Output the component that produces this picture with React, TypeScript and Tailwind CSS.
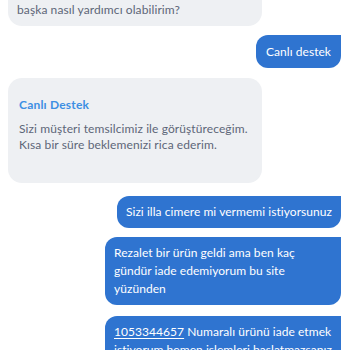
const font = { fontFamily: "Lato, 'Liberation Sans', sans-serif" };

const BotBubble = ({ children, className = "" }: { children: React.ReactNode; className?: string }) => (
  <div className={`w-[254px] bg-[#eef0f3] rounded-[14px] ${className}`}>{children}</div>
);

const UserBubble = ({ children, className = "" }: { children: React.ReactNode; className?: string }) => (
  <div className="flex justify-end">
    <div
      className={`max-w-[236px] bg-[#2f74d0] text-white text-[12px] leading-[18px] tracking-[0.05px] rounded-[12px] rounded-tr-none ${className}`}
    >
      {children}
    </div>
  </div>
);

export default function App() {
  return (
    <div className="h-[350px] w-[350px] overflow-hidden bg-white" style={font}>
      <div className="flex flex-col pl-[8px] pr-[9px] -mt-[20px]">
        <BotBubble className="pt-[22px] pb-[8px] px-[9px]">
          <p className="text-[12px] leading-[16px] tracking-[0.1px] text-[#5d6678]">başka nasıl yardımcı olabilirim?</p>
        </BotBubble>

        <div className="mt-[9px]">
          <UserBubble className="px-[10px] py-[7.5px]">Canlı destek</UserBubble>
        </div>

        <BotBubble className="mt-[10px] pt-[19px] pb-[30px] px-[11px]">
          <p className="text-[12px] font-bold text-[#3d8fe3] leading-[16px] tracking-[0.2px]">Canlı Destek</p>
          <p className="mt-[8px] text-[12px] leading-[16px] tracking-[0.1px] text-[#5d6678]">
            Sizi müşteri temsilcimiz ile görüştüreceğim.
            <br />
            Kısa bir süre beklemenizi rica ederim.
          </p>
        </BotBubble>

        <div className="mt-[13px]">
          <UserBubble className="px-[9px] py-[7px]">Sizi illa cimere mi vermemi istiyorsunuz</UserBubble>
        </div>

        <div className="mt-[9px]">
          <UserBubble className="w-[236px] px-[9px] py-[7px]">
            Rezalet bir ürün geldi ama ben kaç gündür iade edemiyorum bu site yüzünden
          </UserBubble>
        </div>

        <div className="mt-[11px]">
          <UserBubble className="w-[236px] pl-[9px] pr-[6px] py-[7px]">
            <span className="underline underline-offset-2">1053344657</span> Numaralı ürünü iade etmek istiyorum hemen
            işlemleri başlatmazsanız şikayet edeceğim
          </UserBubble>
        </div>
      </div>
    </div>
  );
}
